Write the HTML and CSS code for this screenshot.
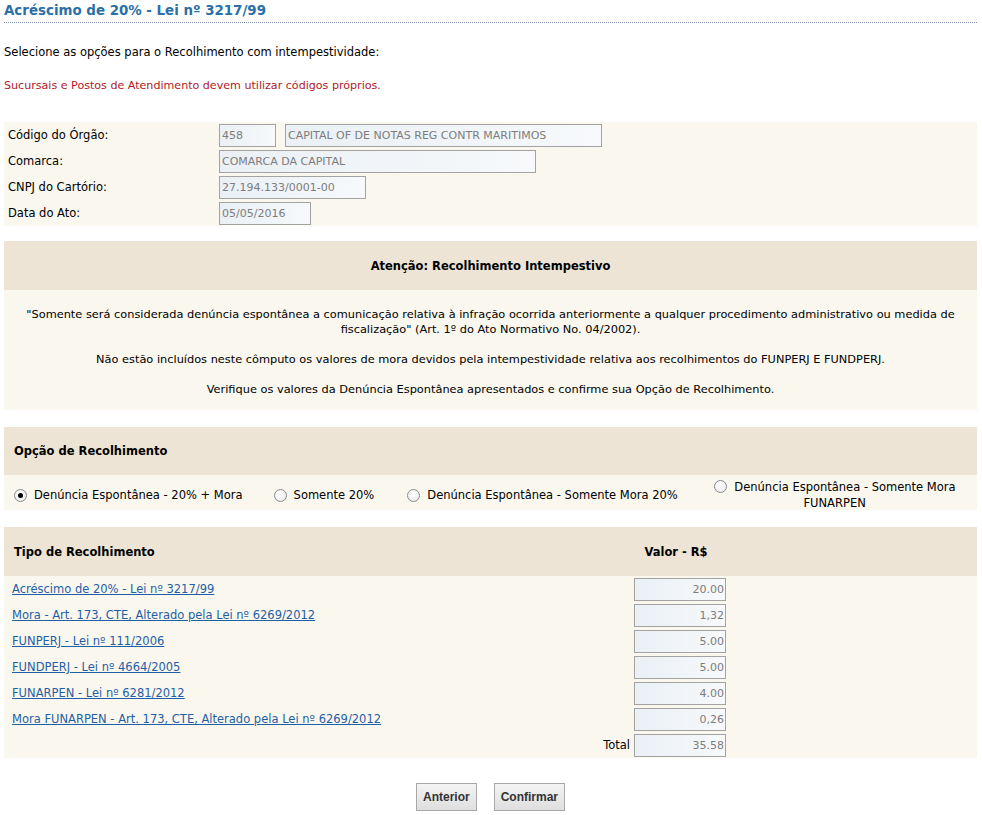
FILE: index.html
```html
<!DOCTYPE html>
<html lang="pt-BR">
<head>
<meta charset="utf-8">
<title>Acréscimo de 20% - Lei nº 3217/99</title>
<link rel="stylesheet" href="styles.css">
</head>
<body>
<div class="page">
  <h1 class="title">Acréscimo de 20% - Lei nº 3217/99</h1>
  <p class="intro">Selecione as opções para o Recolhimento com intempestividade:</p>
  <p class="warn">Sucursais e Postos de Atendimento devem utilizar códigos próprios.</p>

  <div class="info">
    <div class="info-row">
      <span class="info-label">Código do Órgão:</span>
      <span class="info-fields">
        <input class="field f-code" value="458" readonly>
        <input class="field f-name" value="CAPITAL OF DE NOTAS REG CONTR MARITIMOS" readonly>
      </span>
    </div>
    <div class="info-row">
      <span class="info-label">Comarca:</span>
      <span class="info-fields"><input class="field f-comarca" value="COMARCA DA CAPITAL" readonly></span>
    </div>
    <div class="info-row">
      <span class="info-label">CNPJ do Cartório:</span>
      <span class="info-fields"><input class="field f-cnpj" value="27.194.133/0001-00" readonly></span>
    </div>
    <div class="info-row">
      <span class="info-label">Data do Ato:</span>
      <span class="info-fields"><input class="field f-data" value="05/05/2016" readonly></span>
    </div>
  </div>

  <div class="panel panel-first">
    <div class="panel-head center">Atenção: Recolhimento Intempestivo</div>
    <div class="panel-body notice">
      <p>"Somente será considerada denúncia espontânea a comunicação relativa à infração ocorrida anteriormente a qualquer procedimento administrativo ou medida de fiscalização" (Art. 1º do Ato Normativo No. 04/2002).</p>
      <p>Não estão incluídos neste cômputo os valores de mora devidos pela intempestividade relativa aos recolhimentos do FUNPERJ E FUNDPERJ.</p>
      <p>Verifique os valores da Denúncia Espontânea apresentados e confirme sua Opção de Recolhimento.</p>
    </div>
  </div>

  <div class="panel">
    <div class="panel-head left short">Opção de Recolhimento</div>
    <div class="options">
      <label class="opt opt1"><input type="radio" name="opt" class="radio" checked> Denúncia Espontânea - 20% + Mora</label>
      <label class="opt opt2"><input type="radio" name="opt" class="radio"> Somente 20%</label>
      <label class="opt opt3"><input type="radio" name="opt" class="radio"> Denúncia Espontânea - Somente Mora 20%</label>
      <label class="opt opt4"><input type="radio" name="opt" class="radio"> Denúncia Espontânea - Somente Mora<br>FUNARPEN</label>
    </div>
  </div>

  <div class="panel">
    <div class="panel-head values-head">
      <span class="col-tipo">Tipo de Recolhimento</span>
      <span class="col-valor">Valor - R$</span>
    </div>
    <div class="values">
      <div class="vrow"><a href="#" class="vlink">Acréscimo de 20% - Lei nº 3217/99</a><input class="field money" value="20.00" readonly></div>
      <div class="vrow"><a href="#" class="vlink">Mora - Art. 173, CTE, Alterado pela Lei nº 6269/2012</a><input class="field money" value="1,32" readonly></div>
      <div class="vrow"><a href="#" class="vlink">FUNPERJ - Lei nº 111/2006</a><input class="field money" value="5.00" readonly></div>
      <div class="vrow"><a href="#" class="vlink">FUNDPERJ - Lei nº 4664/2005</a><input class="field money" value="5.00" readonly></div>
      <div class="vrow"><a href="#" class="vlink">FUNARPEN - Lei nº 6281/2012</a><input class="field money" value="4.00" readonly></div>
      <div class="vrow"><a href="#" class="vlink">Mora FUNARPEN - Art. 173, CTE, Alterado pela Lei nº 6269/2012</a><input class="field money" value="0,26" readonly></div>
      <div class="vrow total"><span class="total-label">Total</span><input class="field money" value="35.58" readonly></div>
    </div>
  </div>

  <div class="actions">
    <button type="button" class="btn">Anterior</button>
    <button type="button" class="btn">Confirmar</button>
  </div>
</div>
</body>
</html>
```

FILE: styles.css
```css
* { box-sizing: border-box; }

body {
  margin: 0;
  background: #ffffff;
  font-family: "DejaVu Sans", Verdana, sans-serif;
  font-size: 11.5px;
  color: #000;
}

.page {
  padding: 0 5px 0 4px;
}

.title {
  margin: 0;
  padding: 3px 0 4px;
  font-size: 13.4px;
  font-weight: bold;
  color: #2b6fa7;
  border-bottom: 1px dotted #7b93ad;
  line-height: 15px;
}

.intro {
  margin: 22px 0 0;
  line-height: 14px;
}

.warn {
  margin: 20px 0 0;
  font-size: 11.1px;
  color: #b01a1f;
  line-height: 14px;
}

.info {
  margin-top: 29px;
  background: #faf7ef;
  padding: 0 0 0 4px;
}

.info-row {
  display: flex;
  align-items: center;
  height: 26px;
}

.info-label {
  width: 211px;
}

.info-fields {
  display: flex;
  gap: 9px;
}

.field {
  height: 23px;
  border: 1px solid #a3a3a3;
  background: linear-gradient(to right, #eaf0f5, #f7f9fb);
  color: #7d7d7d;
  font-family: "DejaVu Sans", Verdana, sans-serif;
  font-size: 11px;
  padding: 0 2px;
  margin: 0;
  outline: none;
}

.f-code { width: 57px; }
.f-name { width: 317px; }
.f-comarca { width: 317px; }
.f-cnpj { width: 147px; }
.f-data { width: 92px; }

.panel {
  margin-top: 17px;
}

.panel.panel-first {
  margin-top: 15px;
}

.panel-head {
  background: #ede4d5;
  height: 49px;
  display: flex;
  align-items: center;
  font-weight: bold;
}

.panel-head.short { height: 48px; }
.panel-head.center { justify-content: center; }
.panel-head.left { padding-left: 10px; }

.panel-body {
  background: #faf7ef;
}

.notice {
  padding: 17px 15px 13px;
  text-align: center;
  font-size: 11.35px;
}

.notice p {
  margin: 0 0 15px;
  line-height: 15px;
}

.notice p:last-child { margin-bottom: 0; }

.options {
  background: #faf7ef;
  display: flex;
  align-items: center;
  height: 35px;
  padding: 5px 0 0 10px;
}

.opt {
  display: inline-flex;
  align-items: center;
  gap: 7px;
}

.opt2 { margin-left: 31px; }
.opt3 { margin-left: 33px; }
.opt4 {
  margin-left: 36px;
  display: block;
  text-align: center;
  line-height: 16px;
}
.opt4 .radio { vertical-align: -2px; margin-right: 4px; }

.radio {
  appearance: none;
  -webkit-appearance: none;
  width: 13px;
  height: 13px;
  margin: 0;
  border: 1px solid #8a8a8a;
  border-radius: 50%;
  background: radial-gradient(circle at 40% 35%, #ffffff, #e6e6e6);
  position: relative;
  flex: none;
}

.radio:checked::after {
  content: "";
  position: absolute;
  left: 3px;
  top: 3px;
  width: 5px;
  height: 5px;
  border-radius: 50%;
  background: #000;
}

.values-head {
  padding-left: 10px;
}

.col-tipo { width: 616px; }
.col-valor { width: 92px; text-align: center; }

.values {
  background: #faf7ef;
  padding: 0 0 0 8px;
}

.vrow {
  display: flex;
  align-items: center;
  justify-content: space-between;
  width: 714px;
  height: 26px;
}

.vlink {
  color: #1f5fa5;
  text-decoration: underline;
}

.money {
  width: 92px;
  height: 23px;
  text-align: right;
  padding-right: 1px;
}

.total {
  justify-content: flex-end;
  gap: 4px;
}

.actions {
  display: flex;
  justify-content: center;
  gap: 17px;
  margin-top: 25px;
}

.btn {
  height: 28px;
  padding: 0 6px;
  font-family: "Liberation Sans", Arial, sans-serif;
  font-size: 12px;
  font-weight: bold;
  color: #333;
  border: 1px solid #a8a8a8;
  background: linear-gradient(#f4f4f4, #dedede);
  border-radius: 0;
}
```
